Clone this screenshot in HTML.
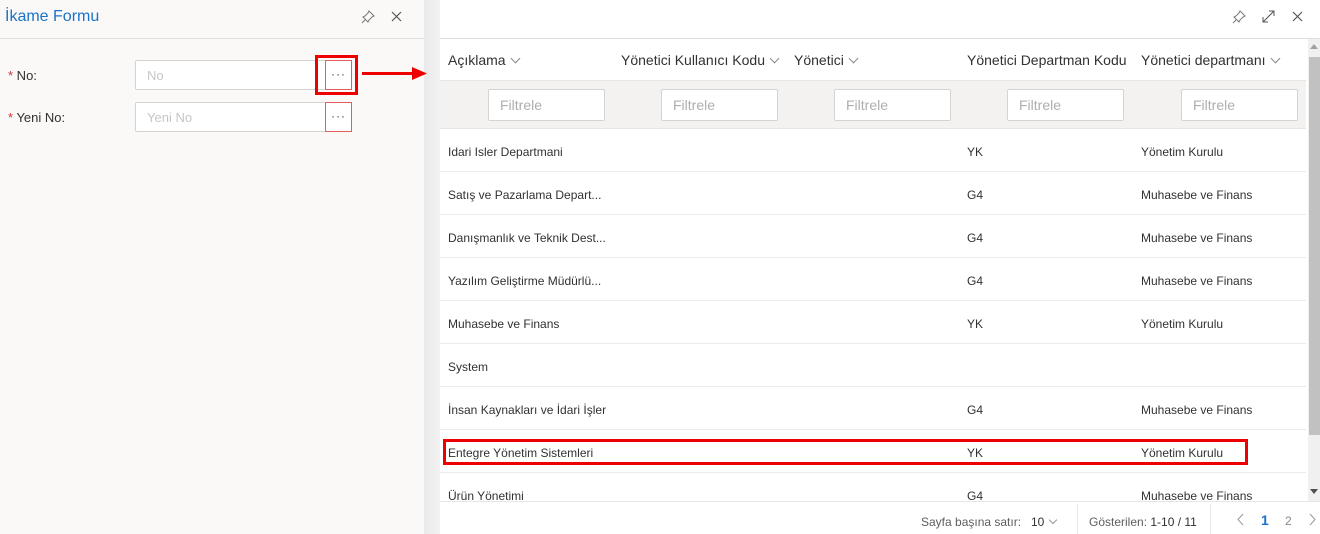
<!DOCTYPE html>
<html><head><meta charset="utf-8"><style>
*{box-sizing:border-box;margin:0;padding:0}
body{width:1320px;height:534px;overflow:hidden;position:relative;font-family:"Liberation Sans","DejaVu Sans",sans-serif;background:#fff;color:#323130}
.a{position:absolute}
.left{left:0;top:0;width:424px;height:534px;background:#faf9f8}
.gap{left:424px;top:0;width:16px;height:534px;background:linear-gradient(90deg,#eaeaea,#f2f2f2)}
.title{left:5px;top:8px;font-size:16px;color:#1a73c8}
.lbl{font-size:13px;color:#323130}
.lbl b{color:#d13438;font-weight:normal}
.inp{background:#fff;border:1px solid #d6d4d2;border-radius:2px;font-size:13px;color:#c8c6c4;padding:7px 11px}
.btn{background:#fff;border:1px solid #e06060;width:27px;height:30px;font-size:12px;text-align:center;line-height:26px;color:#444;letter-spacing:1px}
.h{font-size:14px;color:#323130;top:52px}
.chev{display:inline-block;width:7px;height:7px;border-right:1px solid #888;border-bottom:1px solid #888;transform:rotate(45deg);margin-left:6px;position:relative;top:-3px}
.f{top:89px;width:117px;height:32px;border:1px solid #d6d4d2;border-radius:2px;background:#fff;font-size:14px;color:#b0aeac;padding:7px 11px}
.row{left:440px;width:866px;height:43px;border-bottom:1px solid #edebe9;font-size:12px}
.row span{position:absolute;top:16px}
</style></head><body>
<div class="a left"></div>
<div class="a gap"></div>
<div class="a" style="left:0;top:38px;width:424px;height:1px;background:#e1dfdd"></div>
<div class="a title">İkame Formu</div>
<svg class="a" style="left:361px;top:10px" width="14" height="14" viewBox="0 0 14 14" fill="none" stroke="#777" stroke-width="1"><path d="M8 1l5 5-2 1-3 3-1 2-5-5 2-1 3-3z M4 10L1 13"/></svg>
<svg class="a" style="left:391px;top:11px" width="11" height="11" viewBox="0 0 11 11" stroke="#555" stroke-width="1.2"><path d="M1 1l9 9M10 1l-9 9"/></svg>
<div class="a lbl" style="left:8px;top:68px"><b>*</b> No:</div>
<div class="a lbl" style="left:8px;top:110px"><b>*</b> Yeni No:</div>
<div class="a inp" style="left:135px;top:60px;width:192px;height:30px">No</div>
<div class="a btn" style="left:325px;top:60px">···</div>
<div class="a inp" style="left:135px;top:102px;width:192px;height:30px">Yeni No</div>
<div class="a btn" style="left:325px;top:102px">···</div>
<div class="a" style="left:315px;top:55px;width:43px;height:40px;border:3px solid #e00"></div>
<div class="a" style="left:362px;top:72px;width:54px;height:3px;background:#e00"></div>
<svg class="a" style="left:412px;top:67px" width="16" height="13"><path d="M0 0L15 6.5L0 13z" fill="#e00"/></svg>

<svg class="a" style="left:1232px;top:10px" width="14" height="14" viewBox="0 0 14 14" fill="none" stroke="#777" stroke-width="1"><path d="M8 1l5 5-2 1-3 3-1 2-5-5 2-1 3-3z M4 10L1 13"/></svg>
<svg class="a" style="left:1262px;top:10px" width="13" height="13" viewBox="0 0 13 13" fill="none" stroke="#555" stroke-width="1"><path d="M1 12L12 1M7 1h5v5M1 7v5h5"/></svg>
<svg class="a" style="left:1292px;top:11px" width="11" height="11" viewBox="0 0 11 11" stroke="#555" stroke-width="1.2"><path d="M1 1l9 9M10 1l-9 9"/></svg>
<div class="a" style="left:440px;top:38px;width:880px;height:1px;background:#e1dfdd"></div>

<div class="a h" style="left:448px">Açıklama<i class="chev"></i></div>
<div class="a h" style="left:621px">Yönetici Kullanıcı Kodu<i class="chev"></i></div>
<div class="a h" style="left:794px">Yönetici<i class="chev"></i></div>
<div class="a h" style="left:967px">Yönetici Departman Kodu</div>
<div class="a h" style="left:1141px">Yönetici departmanı<i class="chev"></i></div>
<div class="a" style="left:440px;top:80px;width:866px;height:49px;background:#f3f2f1;border-top:1px solid #e8e6e4;border-bottom:1px solid #e8e6e4"></div>
<div class="a f" style="left:488px">Filtrele</div>
<div class="a f" style="left:661px">Filtrele</div>
<div class="a f" style="left:834px">Filtrele</div>
<div class="a f" style="left:1007px">Filtrele</div>
<div class="a f" style="left:1181px">Filtrele</div>

<div class="a row" style="top:129px"><span style="left:8px">Idari Isler Departmani</span><span style="left:527px">YK</span><span style="left:701px">Yönetim Kurulu</span></div>
<div class="a row" style="top:172px"><span style="left:8px">Satış ve Pazarlama Depart...</span><span style="left:527px">G4</span><span style="left:701px">Muhasebe ve Finans</span></div>
<div class="a row" style="top:215px"><span style="left:8px">Danışmanlık ve Teknik Dest...</span><span style="left:527px">G4</span><span style="left:701px">Muhasebe ve Finans</span></div>
<div class="a row" style="top:258px"><span style="left:8px">Yazılım Geliştirme Müdürlü...</span><span style="left:527px">G4</span><span style="left:701px">Muhasebe ve Finans</span></div>
<div class="a row" style="top:301px"><span style="left:8px">Muhasebe ve Finans</span><span style="left:527px">YK</span><span style="left:701px">Yönetim Kurulu</span></div>
<div class="a row" style="top:344px"><span style="left:8px">System</span></div>
<div class="a row" style="top:387px"><span style="left:8px">İnsan Kaynakları ve İdari İşler</span><span style="left:527px">G4</span><span style="left:701px">Muhasebe ve Finans</span></div>
<div class="a row" style="top:430px"><span style="left:8px">Entegre Yönetim Sistemleri</span><span style="left:527px">YK</span><span style="left:701px">Yönetim Kurulu</span></div>
<div class="a row" style="top:473px;height:29px;overflow:hidden;border:none"><span style="left:8px">Ürün Yönetimi</span><span style="left:527px">G4</span><span style="left:701px">Muhasebe ve Finans</span></div>
<div class="a" style="left:443px;top:439px;width:805px;height:26px;border:3px solid #e00"></div>

<div class="a" style="left:1308px;top:39px;width:12px;height:463px;background:#f0f0f0"></div>
<div class="a" style="left:1309px;top:57px;width:11px;height:378px;background:#c1c1c1"></div>
<svg class="a" style="left:1310px;top:44px" width="8" height="5"><path d="M0 5L4 0L8 5z" fill="#a0a0a0"/></svg>
<svg class="a" style="left:1310px;top:489px" width="8" height="5"><path d="M0 0L4 5L8 0z" fill="#505050"/></svg>

<div class="a" style="left:440px;top:501px;width:880px;height:1px;background:#e8e6e4"></div>
<div class="a" style="left:921px;top:515px;font-size:12px;color:#605e5c">Sayfa başına satır:</div>
<div class="a" style="left:1031px;top:515px;font-size:12px;color:#323130">10<i class="chev" style="width:6px;height:6px;border-color:#999"></i></div>
<div class="a" style="left:1077px;top:504px;width:1px;height:30px;background:#e8e6e4"></div>
<div class="a" style="left:1089px;top:515px;font-size:12px;color:#605e5c">Gösterilen: <span style="color:#323130">1-10 / 11</span></div>
<div class="a" style="left:1210px;top:504px;width:1px;height:30px;background:#e8e6e4"></div>
<svg class="a" style="left:1237px;top:513px" width="7" height="13" fill="none" stroke="#999"><path d="M6 1L1 6.5L6 12"/></svg>
<div class="a" style="left:1261px;top:512px;font-size:14px;color:#1a73c8;font-weight:bold">1</div>
<div class="a" style="left:1285px;top:514px;font-size:12px;color:#888">2</div>
<svg class="a" style="left:1309px;top:513px" width="7" height="13" fill="none" stroke="#999"><path d="M1 1L6 6.5L1 12"/></svg>
</body></html>
